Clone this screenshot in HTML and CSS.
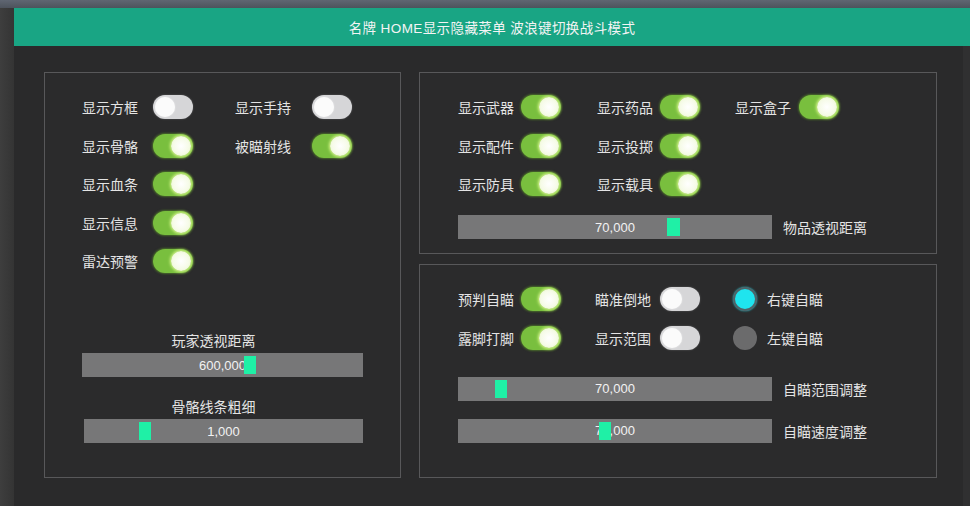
FILE: index.html
```html
<!DOCTYPE html>
<html lang="zh-CN">
<head>
<meta charset="utf-8">
<title>菜单</title>
<link rel="stylesheet" href="styles.css">
</head>
<body>
<div class="frame">
  <div class="window">
    <div class="header">名牌 HOME显示隐藏菜单 波浪键切换战斗模式</div>
    <div class="content">
      <section class="panel panel-left">
        <div class="cols">
          <div class="col col-l1">
            <div class="item"><span class="lbl lw71">显示方框</span><span class="tg off"><i></i></span></div>
            <div class="item"><span class="lbl lw71">显示骨骼</span><span class="tg on"><i></i></span></div>
            <div class="item"><span class="lbl lw71">显示血条</span><span class="tg on"><i></i></span></div>
            <div class="item"><span class="lbl lw71">显示信息</span><span class="tg on"><i></i></span></div>
            <div class="item"><span class="lbl lw71">雷达预警</span><span class="tg on"><i></i></span></div>
          </div>
          <div class="col">
            <div class="item"><span class="lbl lw77">显示手持</span><span class="tg off"><i></i></span></div>
            <div class="item"><span class="lbl lw77">被瞄射线</span><span class="tg on"><i></i></span></div>
          </div>
        </div>
        <div class="lsliders">
          <div class="ltitle">玩家透视距离</div>
          <div class="bar lbar"><span class="val">600,000</span><b class="knob" style="left:57.7%"></b></div>
          <div class="ltitle second">骨骼线条粗细</div>
          <div class="bar lbar lbar2"><span class="val">1,000</span><b class="knob" style="left:19.7%"></b></div>
        </div>
      </section>

      <section class="panel panel-rt">
        <div class="cols">
          <div class="col col-r">
            <div class="item"><span class="lbl lw63">显示武器</span><span class="tg on"><i></i></span></div>
            <div class="item"><span class="lbl lw63">显示配件</span><span class="tg on"><i></i></span></div>
            <div class="item"><span class="lbl lw63">显示防具</span><span class="tg on"><i></i></span></div>
          </div>
          <div class="col col-r2">
            <div class="item"><span class="lbl lw63">显示药品</span><span class="tg on"><i></i></span></div>
            <div class="item"><span class="lbl lw63">显示投掷</span><span class="tg on"><i></i></span></div>
            <div class="item"><span class="lbl lw63">显示载具</span><span class="tg on"><i></i></span></div>
          </div>
          <div class="col">
            <div class="item"><span class="lbl lw64">显示盒子</span><span class="tg on"><i></i></span></div>
          </div>
        </div>
        <div class="srow first">
          <div class="bar rbar"><span class="val">70,000</span><b class="knob wide" style="left:66.6%"></b></div>
          <span class="slbl">物品透视距离</span>
        </div>
      </section>

      <section class="panel panel-rb">
        <div class="cols">
          <div class="col col-b1">
            <div class="item"><span class="lbl lw63">预判自瞄</span><span class="tg on"><i></i></span></div>
            <div class="item"><span class="lbl lw63">露脚打脚</span><span class="tg on"><i></i></span></div>
          </div>
          <div class="col col-b2">
            <div class="item"><span class="lbl lw65">瞄准倒地</span><span class="tg off"><i></i></span></div>
            <div class="item"><span class="lbl lw65">显示范围</span><span class="tg off"><i></i></span></div>
          </div>
          <div class="col">
            <div class="item"><span class="radio sel"></span><span class="rlbl">右键自瞄</span></div>
            <div class="item"><span class="radio"></span><span class="rlbl">左键自瞄</span></div>
          </div>
        </div>
        <div class="srow first2">
          <div class="bar rbar"><span class="val">70,000</span><b class="knob" style="left:11.8%"></b></div>
          <span class="slbl">自瞄范围调整</span>
        </div>
        <div class="srow next">
          <div class="bar rbar"><span class="val">70,000</span><b class="knob" style="left:44.9%"></b></div>
          <span class="slbl">自瞄速度调整</span>
        </div>
      </section>
    </div>
  </div>
</div>
</body>
</html>
```

FILE: styles.css
```css
* { box-sizing: border-box; }

html, body {
  margin: 0;
  padding: 0;
  width: 970px;
  height: 506px;
  overflow: hidden;
  font-family: "Liberation Sans", "Noto Sans CJK SC", sans-serif;
}

.frame {
  height: 506px;
  padding: 8px 0 0 14px;
  background:
    linear-gradient(180deg, #5f6672 0, #4d535c 8px, transparent 8px),
    linear-gradient(90deg, #3e3e3e 0, #343434 14px);
}

.window {
  height: 498px;
  background: #2a2a2b;
  display: flex;
  flex-direction: column;
  box-shadow: inset -7px 0 0 #303031;
}

.header {
  height: 38px;
  flex: none;
  background: #19a584;
  color: #f4f4f4;
  font-size: 13.5px;
  letter-spacing: 0.4px;
  display: flex;
  align-items: center;
  justify-content: center;
}

.content {
  display: grid;
  grid-template-columns: 357px 518px;
  grid-template-rows: 182px 214px;
  column-gap: 18px;
  row-gap: 10px;
  padding: 26px 0 0 30px;
}

.panel {
  border: 1px solid #58585a;
  padding: 22px 0 0 37px;
  background: #2b2b2c;
}

.panel-rt, .panel-rb { padding-left: 38px; }

.panel-left { grid-row: 1 / span 2; }

.cols { display: flex; }

.col {
  display: flex;
  flex-direction: column;
  gap: 14.5px;
}

.col-l1 { width: 153px; }
.col-r { width: 139px; }
.col-r2 { width: 138px; }
.col-b1 { width: 137px; }
.col-b2 { width: 138px; }

.item {
  display: flex;
  align-items: center;
  height: 24px;
}

.lbl {
  color: #e4e4e4;
  font-size: 14px;
  white-space: nowrap;
  flex: none;
}
.lw71 { width: 71px; }
.lw77 { width: 77px; }
.lw63 { width: 63px; }
.lw64 { width: 64px; }
.lw65 { width: 65px; }

/* toggle switch */
.tg {
  position: relative;
  width: 40px;
  height: 24px;
  border-radius: 12px;
  flex: none;
}
.tg i {
  position: absolute;
  top: 2px;
  width: 20px;
  height: 20px;
  border-radius: 50%;
}
.tg.on {
  background: #79bf3e;
  box-shadow: 0 0 2px 1px rgba(98, 160, 40, 0.55);
}
.tg.on i {
  right: 2px;
  background: radial-gradient(circle at 50% 50%, #ffffff 0, #f6fbe8 55%, #e4f5b4 100%);
  box-shadow: 0 0 3px 1px #d6f58a;
}
.tg.off {
  background: #d6d6d8;
  box-shadow: 0 0 2px rgba(255, 255, 255, 0.25);
}
.tg.off i {
  left: 2px;
  background: #fbfbfb;
  box-shadow: 0 0 2px rgba(255, 255, 255, 0.6);
}

/* sliders */
.bar {
  position: relative;
  height: 24px;
  background: #777778;
  display: flex;
  align-items: center;
  justify-content: center;
}
.val {
  color: #f2f2f2;
  font-size: 13px;
}
.knob {
  position: absolute;
  top: 3px;
  width: 12px;
  height: 18px;
  background: #1ff0a6;
}
.knob.wide { width: 13px; }

.lsliders {
  margin-top: 58px;
  width: 281px;
}
.ltitle {
  height: 20px;
  line-height: 20px;
  text-align: center;
  padding-right: 18px;
  color: #e4e4e4;
  font-size: 14px;
  margin-bottom: 2px;
}
.ltitle.second { margin-top: 20px; }
.lbar { width: 281px; }
.lbar2 { width: 279px; margin-left: 2px; }

.srow {
  display: flex;
  align-items: center;
}
.srow.first { margin-top: 19px; }
.srow.first2 { margin-top: 27px; }
.srow.next { margin-top: 18px; }
.rbar { width: 314px; flex: none; }
.slbl {
  margin-left: 11px;
  color: #e4e4e4;
  font-size: 14px;
  white-space: nowrap;
}

/* radio */
.radio {
  width: 24px;
  height: 24px;
  border-radius: 50%;
  background: #6b6b6c;
  flex: none;
}
.radio.sel {
  background: #1fe4ee;
  border: 2px solid #4f6368;
  box-shadow: 0 0 2px #23c8d4;
}
.rlbl {
  margin-left: 10px;
  color: #e4e4e4;
  font-size: 14px;
  white-space: nowrap;
}
```
